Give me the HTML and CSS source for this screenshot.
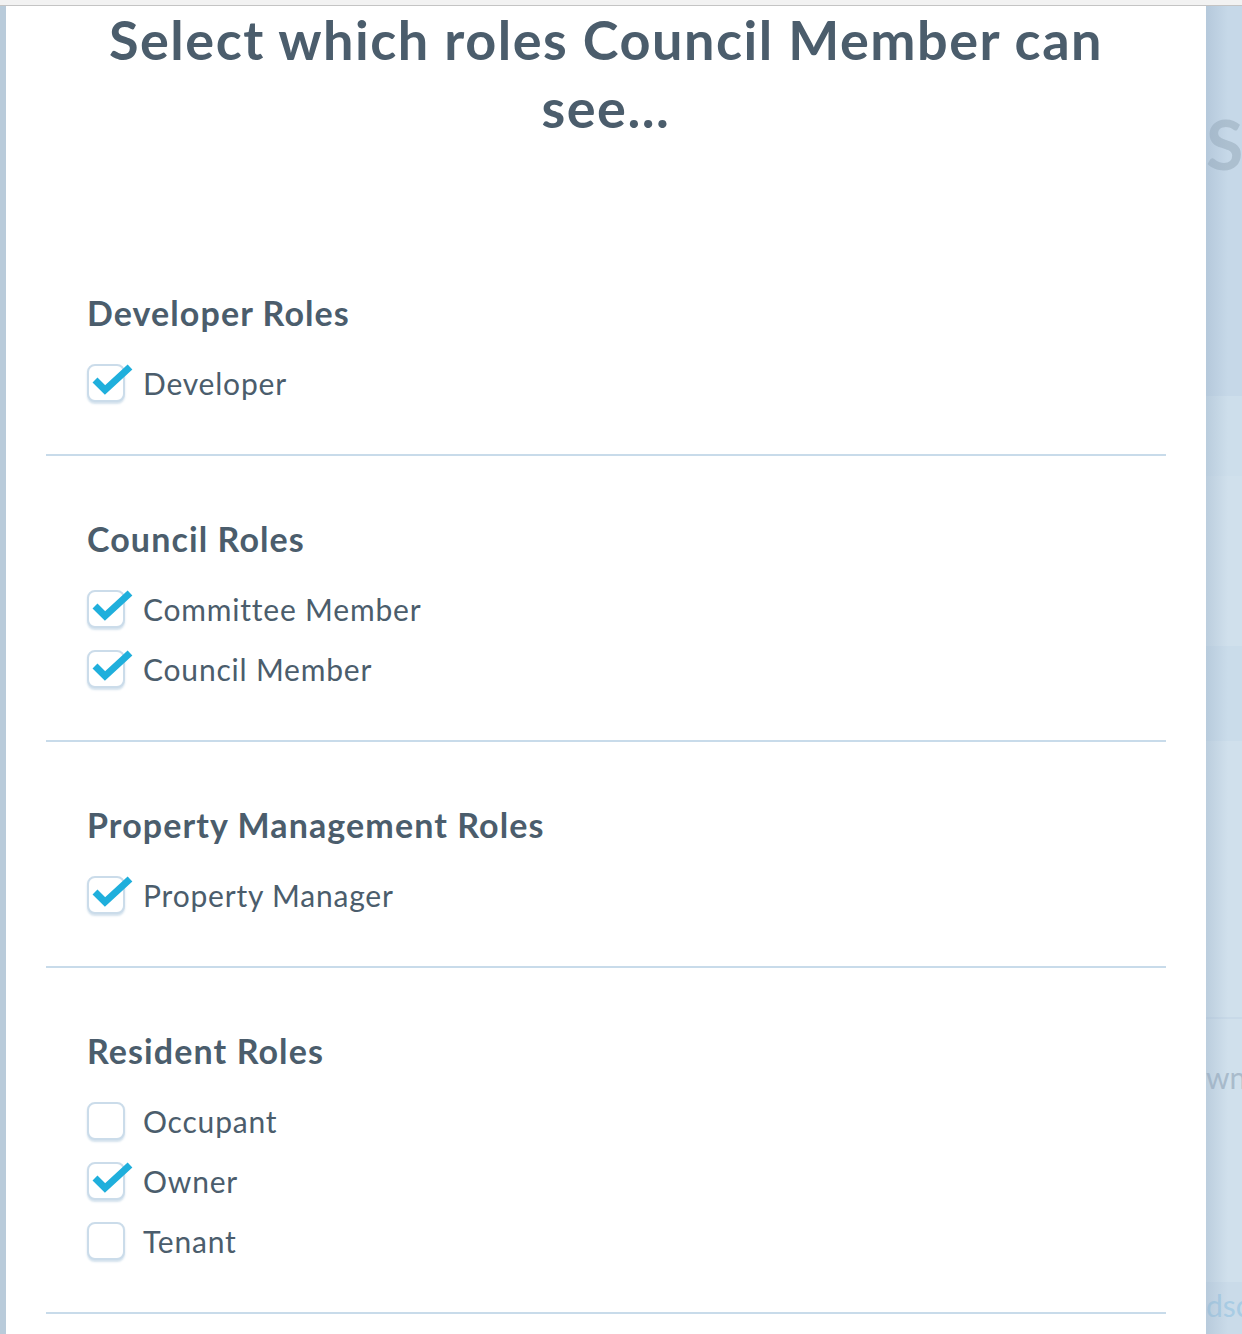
FILE: index.html
```html
<!DOCTYPE html>
<html lang="en">
<head>
<meta charset="utf-8">
<title>Select roles</title>
<link rel="stylesheet" href="styles.css">
</head>
<body>
<div class="topbar"></div>
<div class="stage">
  <div class="left-strip"></div>
  <main class="modal">
    <h1 class="title">Select which roles Council Member can see...</h1>

    <section class="group">
      <h2 class="group-title">Developer Roles</h2>
      <ul class="options">
        <li class="option"><span class="box checked"><svg class="tick" viewBox="0 0 48 32" width="48" height="32"><path d="M8 16 L18 26 L43 3"/></svg></span><span class="label">Developer</span></li>
      </ul>
    </section>

    <section class="group">
      <h2 class="group-title">Council Roles</h2>
      <ul class="options">
        <li class="option"><span class="box checked"><svg class="tick" viewBox="0 0 48 32" width="48" height="32"><path d="M8 16 L18 26 L43 3"/></svg></span><span class="label">Committee Member</span></li>
        <li class="option"><span class="box checked"><svg class="tick" viewBox="0 0 48 32" width="48" height="32"><path d="M8 16 L18 26 L43 3"/></svg></span><span class="label">Council Member</span></li>
      </ul>
    </section>

    <section class="group">
      <h2 class="group-title">Property Management Roles</h2>
      <ul class="options">
        <li class="option"><span class="box checked"><svg class="tick" viewBox="0 0 48 32" width="48" height="32"><path d="M8 16 L18 26 L43 3"/></svg></span><span class="label">Property Manager</span></li>
      </ul>
    </section>

    <section class="group">
      <h2 class="group-title">Resident Roles</h2>
      <ul class="options">
        <li class="option"><span class="box"></span><span class="label">Occupant</span></li>
        <li class="option"><span class="box checked"><svg class="tick" viewBox="0 0 48 32" width="48" height="32"><path d="M8 16 L18 26 L43 3"/></svg></span><span class="label">Owner</span></li>
        <li class="option"><span class="box"></span><span class="label">Tenant</span></li>
      </ul>
    </section>
  </main>
  <aside class="backdrop">
    <div class="band b1"><span class="ghost big">S</span></div>
    <div class="band b2"></div>
    <div class="band b3"></div>
    <div class="band b4"></div>
    <div class="band b5"></div>
    <div class="band b6"><span class="ghost mid">wn</span></div>
    <div class="band b7"><span class="ghost link">dsc</span></div>
  </aside>
</div>
</body>
</html>
```

FILE: styles.css
```css
html, body {
  margin: 0;
  padding: 0;
  height: 1334px;
  overflow: hidden;
  background: #ffffff;
  font-family: "Lato", "Open Sans", "Liberation Sans", sans-serif;
  color: #4b5d6c;
}

.topbar {
  height: 5px;
  background: #f2f2f2;
  border-bottom: 1px solid #c4c4c4;
}

.stage {
  display: flex;
  height: 1328px;
}

.left-strip {
  width: 6px;
  flex: 0 0 6px;
  background: #b9cbda;
}

.modal {
  width: 1200px;
  flex: 0 0 1200px;
  background: #ffffff;
  padding: 0 40px;
  box-sizing: border-box;
}

.title {
  margin: 0;
  padding: 0 40px;
  text-align: center;
  font-size: 54px;
  line-height: 68px;
  letter-spacing: 1.5px;
  font-weight: 700;
  color: #4b5d6c;
  height: 225px;
  box-sizing: border-box;
}

.group {
  padding: 63px 0 41px 41px;
  border-bottom: 2px solid #c8dbea;
}

.group:first-of-type {
  padding-top: 62px;
}

.group-title {
  margin: 0 0 20px;
  font-size: 34px;
  line-height: 40px;
  letter-spacing: 1.1px;
  font-weight: 700;
  color: #4b5d6c;
}

.options {
  list-style: none;
  margin: 0;
  padding: 0;
}

.option {
  display: flex;
  align-items: center;
  height: 60px;
  gap: 18px;
}

.box {
  position: relative;
  width: 38px;
  height: 38px;
  box-sizing: border-box;
  border: 2px solid #cbdcea;
  border-radius: 8px;
  background: #ffffff;
  box-shadow: 0 2px 2px rgba(160, 190, 215, 0.45);
  flex: 0 0 38px;
}

.tick {
  position: absolute;
  left: -2px;
  top: -2px;
  overflow: visible;
}

.tick path {
  fill: none;
  stroke: #1fafdc;
  stroke-width: 7;
  stroke-linecap: butt;
  stroke-linejoin: miter;
}

.label {
  font-size: 30px;
  line-height: 34px;
  letter-spacing: 0.8px;
  font-weight: 400;
  color: #4b5d6c;
}

.backdrop {
  position: relative;
  flex: 1 1 auto;
  overflow: hidden;
  display: flex;
  flex-direction: column;
  background: #c9dae9;
}

.backdrop::before {
  content: "";
  position: absolute;
  left: 0;
  top: 0;
  bottom: 0;
  width: 22px;
  background: linear-gradient(to right, rgba(150, 172, 195, 0.35), rgba(150, 172, 195, 0));
  z-index: 2;
}

.band {
  position: relative;
  overflow: hidden;
}

.b1 { height: 390px; background: #c6d8e8; }
.b2 { height: 80px; background: #cddeeb; }
.b3 { height: 170px; background: #d0e0ec; }
.b4 { height: 95px; background: #cadcea; }
.b5 { height: 276px; background: #d0e0ec; }
.b6 { height: 263px; background: #d0e0ec; border-top: 2px solid #c8d9e8; }
.b7 { flex: 1 1 auto; background: #cadbe9; }

.ghost {
  position: absolute;
  left: 0;
  white-space: nowrap;
}

.big {
  top: 93px;
  font-size: 68px;
  line-height: 90px;
  font-weight: 700;
  color: #acbfcf;
}

.mid {
  top: 38px;
  font-size: 30px;
  line-height: 40px;
  color: #a9bbcb;
}

.link {
  top: 3px;
  font-size: 30px;
  line-height: 40px;
  color: #a8cce4;
}
```
